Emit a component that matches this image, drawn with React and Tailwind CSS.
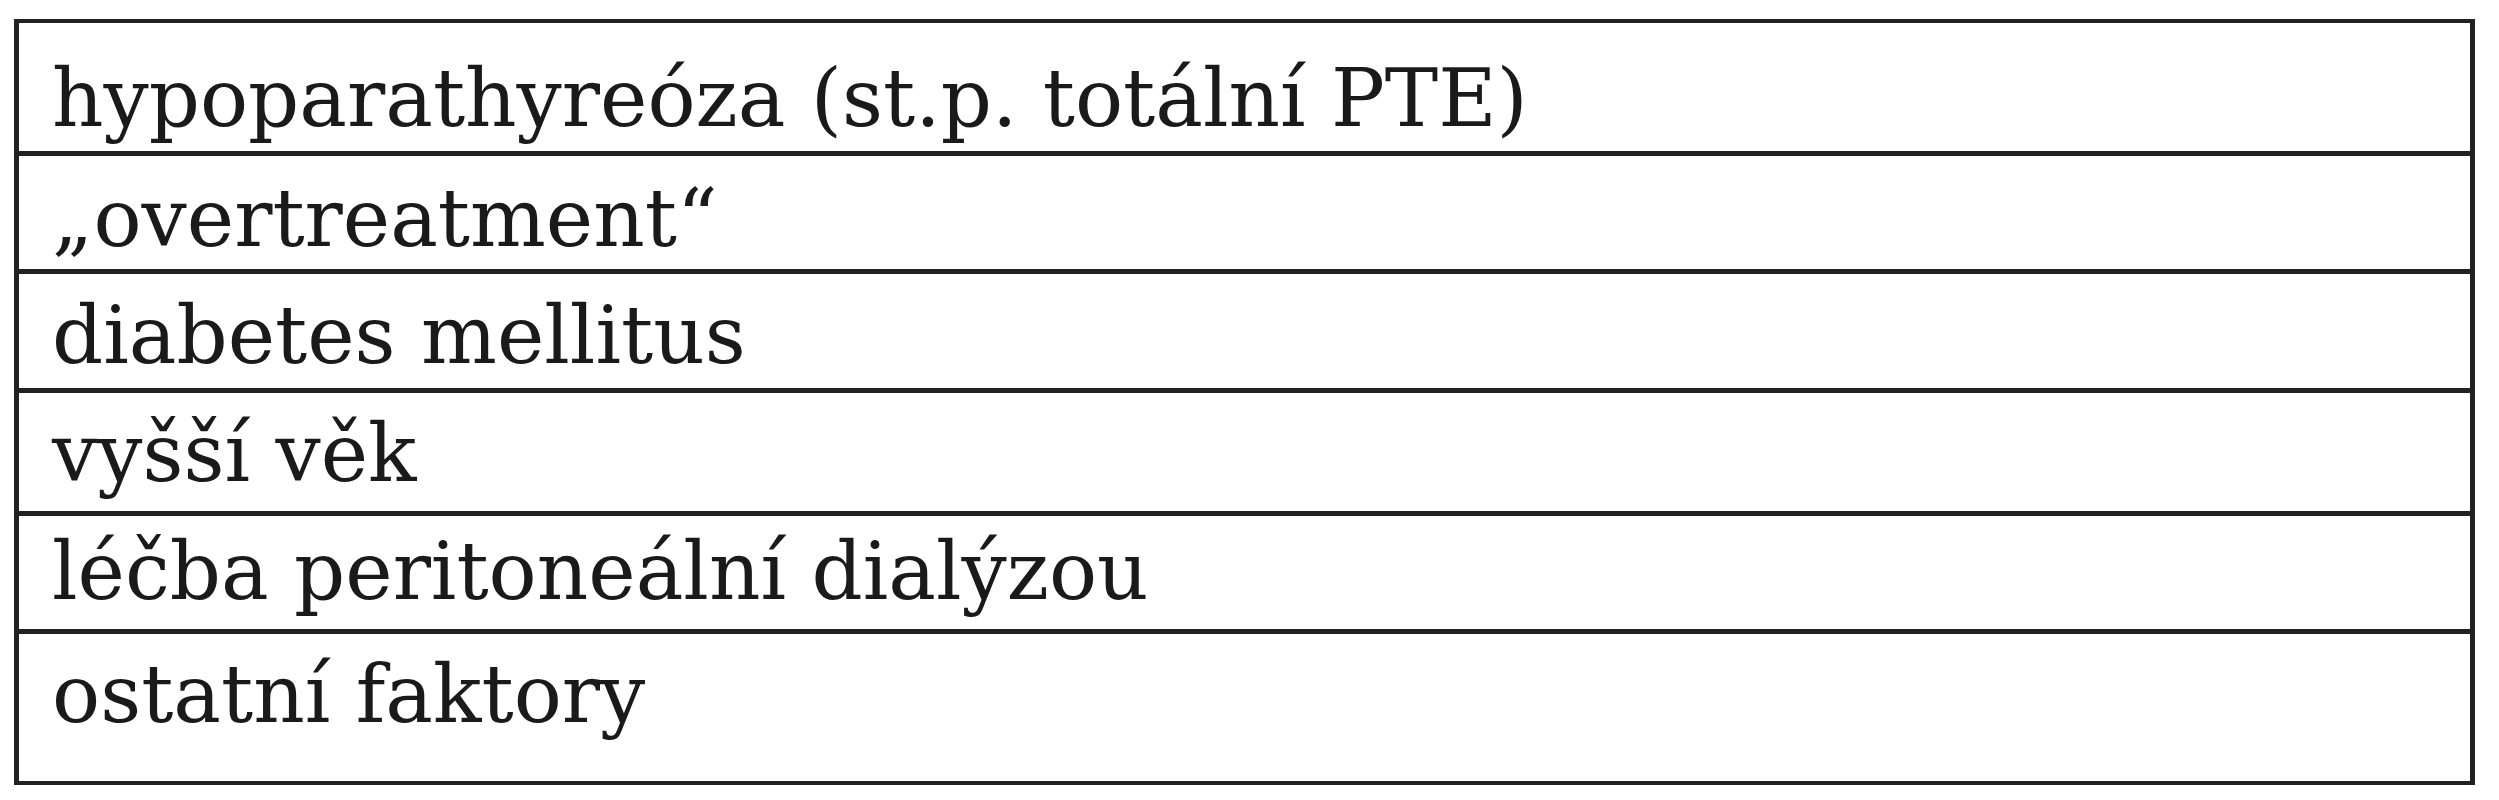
import React from 'react';

const rows = [
  { text: 'hypoparathyreóza (st.p. totální PTE)', h: 'h-[133px]', pt: 'pt-[36px]' },
  { text: '„overtreatment“', h: 'h-[118px]', pt: 'pt-[23px]' },
  { text: 'diabetes mellitus', h: 'h-[119px]', pt: 'pt-[22px]' },
  { text: 'vyšší věk', h: 'h-[123px]', pt: 'pt-[21px]' },
  { text: 'léčba peritoneální dialýzou', h: 'h-[118px]', pt: 'pt-[16px]' },
  { text: 'ostatní faktory', h: 'h-[147px]', pt: 'pt-[21px]' },
];

export default function App() {
  return (
    <div className="w-[2499px] h-[800px] bg-white pl-[14px] pt-[19px]">
      <div className="w-[2461px] flex flex-col border-x-[5px] border-y-[4px] border-[#222222]">
        {rows.map((r, i) => (
          <div
            key={i}
            className={`${r.h} ${r.pt} pl-[33px] ${i < rows.length - 1 ? 'border-b-[5px] border-[#222222]' : ''}`}
          >
            <span className="block text-[80px] leading-none text-[#1a1a1a] font-['DejaVu_Serif',serif] whitespace-nowrap">
              {r.text}
            </span>
          </div>
        ))}
      </div>
    </div>
  );
}
